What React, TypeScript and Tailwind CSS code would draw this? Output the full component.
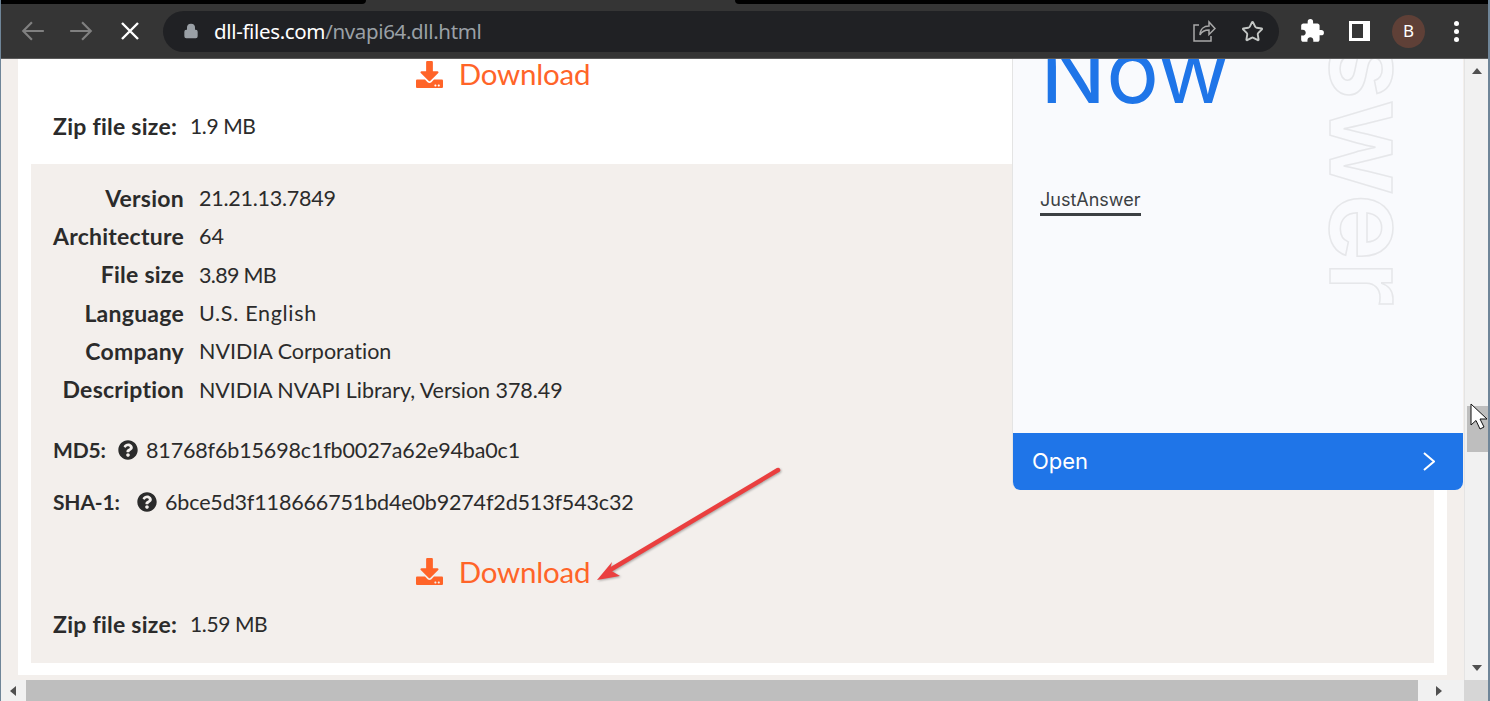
import { Lock, Star } from 'lucide-react';
import { FaDownload, FaQuestionCircle } from 'react-icons/fa';
import { MdExtension } from 'react-icons/md';

const details = [
  ['Version', '21.21.13.7849', 'tracking-[-0.25px]'],
  ['Architecture', '64', ''],
  ['File size', '3.89 MB', 'tracking-[-0.7px]'],
  ['Language', 'U.S. English', 'tracking-[0.7px]'],
  ['Company', 'NVIDIA Corporation', ''],
  ['Description', 'NVIDIA NVAPI Library, Version 378.49', 'tracking-[-0.05px]'],
];

function Label({ children }: { children: string }) {
  return <b className="text-[23px] font-bold tracking-[0.25px]">{children}</b>;
}

function DownloadLink({ className }: { className: string }) {
  return (
    <div className={`flex h-[28px] items-center justify-center text-[#ff6428] ${className}`}>
      <FaDownload className="mr-[15px] h-[27px] w-[29px]" />
      <span className="text-[29.500px] leading-[28px] tracking-[-0.2px]">Download</span>
    </div>
  );
}

function ZipSize({ size }: { size: string }) {
  return (
    <p className="flex h-[28px] items-center text-[21px] tracking-[-0.4px] text-[#2b2b2b]">
      <Label>Zip file size:</Label>
      <span className="ml-[13px]">{size}</span>
    </p>
  );
}

function HashRow({ label, labelWidth, hash, className }: { label: string; labelWidth: string; hash: string; className: string }) {
  return (
    <p className={`flex h-[32px] items-center tracking-[-0.15px] ${className}`}>
      <b className={`text-[21px] font-bold ${labelWidth}`}>{label}</b>
      <FaQuestionCircle className="ml-[13px] mr-[8px] h-[20px] w-[20px]" />
      {hash}
    </p>
  );
}

function Toolbar() {
  return (
    <header className="shrink-0">
      <div className="flex h-[4px] bg-[#353535]">
        <div className="w-[366px] rounded-br-[6px] bg-black" />
        <div className="w-[369px]" />
        <div className="flex-1 rounded-bl-[6px] bg-black" />
      </div>
      <div className="flex h-[55px] items-center border-b border-[#5a5a5a] bg-[#353535] pl-[20px]">
        <svg viewBox="0 0 24 24" className="h-[26px] w-[26px] text-[#808080]" fill="none" stroke="currentColor" strokeWidth="2"><path d="M22 12H3M11 4l-8 8 8 8" /></svg>
        <svg viewBox="0 0 24 24" className="ml-[22px] h-[26px] w-[26px] text-[#808080]" fill="none" stroke="currentColor" strokeWidth="2"><path d="M2 12h19M13 4l8 8-8 8" /></svg>
        <svg viewBox="0 0 24 24" className="ml-[24px] h-[24px] w-[24px] text-white" fill="none" stroke="currentColor" strokeWidth="2.4"><path d="M4 4l16 16M20 4L4 20" /></svg>
        <div className="ml-[21px] flex h-[41px] w-[1116px] items-center rounded-full bg-[#202124] pl-[20px] pr-[15px]">
          <Lock className="h-[16px] w-[16px] text-[#9aa0a6]" fill="#9aa0a6" strokeWidth={2} />
          <p className="ml-[15px] flex-1 font-['Noto_Sans',sans-serif] text-[20.500px] tracking-[-0.35px]">
            <span className="text-white">dll-files.com</span>
            <span className="text-[#9aa0a6]">/nvapi64.dll.html</span>
          </p>
          <svg viewBox="0 0 24 24" className="h-[24px] w-[24px] text-[#a8a8a8]" fill="none" stroke="currentColor" strokeWidth="1.5"><path d="M7 6H2v16h17v-5M8 16c0-6 4-9 9-9V3l6 6.500-6 6V11c-4 0-7 1-9 5z" /></svg>
          <Star className="ml-[25px] h-[23px] w-[23px] text-[#c4c7c5]" strokeWidth={2} />
        </div>
        <MdExtension className="ml-[20px] h-[26px] w-[26px] text-white" />
        <div className="ml-[24px] flex h-[20px] w-[21px] bg-white py-[3px] pl-[3px] pr-[7px]"><div className="flex-1 bg-[#353535]" /></div>
        <div className="ml-[22px] flex h-[33px] w-[33px] items-center justify-center rounded-full bg-[#5f4037] font-['Noto_Sans',sans-serif] text-[17px] text-white">B</div>
        <div className="ml-[29px] flex flex-col gap-[3px]">
          <i className="h-[5px] w-[5px] rounded-full bg-white" />
          <i className="h-[5px] w-[5px] rounded-full bg-white" />
          <i className="h-[5px] w-[5px] rounded-full bg-white" />
        </div>
      </div>
    </header>
  );
}

function Ad() {
  return (
    <aside className="absolute left-[1012px] top-0 flex h-[431px] w-[451px] flex-col overflow-hidden rounded-b-[8px] border-l border-[#e4e4e4] bg-[#f9fafd] font-['Inter',sans-serif]">
      <div className="relative flex-1 overflow-hidden pl-[27px]">
        <p className="mt-[-23px] text-[88px] leading-[70px] text-[#1f75e8]">Now</p>
        <p className="mt-[81px] inline-block border-b-[3px] border-[#3c4043] text-[18px] leading-[26px] text-[#3c4043]">JustAnswer</p>
        <span className="absolute left-[321px] top-[-200px] h-[447px] text-right text-[114px] font-semibold leading-[74px] text-transparent [-webkit-text-stroke:1.500px_#e6e7ea] [writing-mode:vertical-rl]">swer</span>
      </div>
      <div className="flex h-[57px] items-center justify-between bg-[#1f75e8] pl-[19px] pr-[28px] text-white">
        <span className="text-[22px]">Open</span>
        <svg viewBox="0 0 12 19" className="h-[19px] w-[12px]" fill="none" stroke="currentColor" strokeWidth="2"><path d="M1 1l10 8.500L1 18" /></svg>
      </div>
    </aside>
  );
}

function VerticalScrollbar() {
  return (
    <div className="flex w-[26px] shrink-0 flex-col border-l border-[#e4e4e4] bg-[#f1f1f1] pr-[2px]">
      <div className="flex h-[24px] items-center justify-center"><i className="border-x-[5px] border-b-[6px] border-x-transparent border-b-[#505050]" /></div>
      <div className="relative flex-1">
        <div className="absolute left-[2px] right-0 top-[323px] h-[46px] bg-[#bebebe]" />
      </div>
      <div className="flex h-[24px] items-center justify-center"><i className="border-x-[5px] border-t-[6px] border-x-transparent border-t-[#505050]" /></div>
    </div>
  );
}

export default function App() {
  return (
    <div className="relative flex h-[701px] w-[1490px] flex-col overflow-hidden bg-[#f3efec] font-['Lato',sans-serif] [font-variant-ligatures:none]">
      <Toolbar />
      <div className="flex min-h-0 flex-1">
        <main className="relative min-w-0 flex-1 overflow-hidden">
          <div className="ml-[18px] h-[616px] w-[1429px] bg-white pt-[1px]">
            <DownloadLink className="w-[969px]" />
            <div className="ml-[35px] mt-[24px]"><ZipSize size="1.9 MB" /></div>
            <section className="ml-[13px] mt-[24px] h-[499px] w-[1403px] bg-[#f3efec] pl-[22px] pt-[15px] text-[21.500px] text-[#2b2b2b]">
              <dl className="grid grid-cols-[131px_1fr] gap-x-[15px]">
                {details.map(([label, value, tracking]) => (
                  <div key={label} className="col-span-2 grid h-[38.300px] grid-cols-subgrid items-center">
                    <dt className="text-right"><Label>{label}</Label></dt>
                    <dd className={tracking}>{value}</dd>
                  </div>
                ))}
              </dl>
              <HashRow className="mt-[25px]" label="MD5:" labelWidth="w-[52px]" hash="81768f6b15698c1fb0027a62e94ba0c1" />
              <HashRow className="mt-[20px]" label="SHA-1:" labelWidth="w-[71px]" hash="6bce5d3f118666751bd4e0b9274f2d513f543c32" />
              <DownloadLink className="mt-[40px] w-[899px]" />
              <div className="mt-[24px]"><ZipSize size="1.59 MB" /></div>
            </section>
          </div>
          <Ad />
        </main>
        <VerticalScrollbar />
      </div>
      <div className="flex h-[21px] shrink-0 bg-[#f1f1f1]">
        <div className="flex w-[26px] items-center justify-center"><i className="border-y-[5px] border-r-[6px] border-y-transparent border-r-[#505050]" /></div>
        <div className="w-[1392px] bg-[#bebebe]" />
        <div className="flex flex-1 items-center justify-center pr-[4px]"><i className="border-y-[5px] border-l-[6px] border-y-transparent border-l-[#505050]" /></div>
        <div className="w-[26px] bg-[#d6d6d6]" />
      </div>
      {/* red annotation arrow */}
      <svg className="absolute left-[590px] top-[460px] h-[130px] w-[200px] drop-shadow-[1px_1px_1px_rgba(0,0,0,0.3)]" viewBox="0 0 200 130" fill="none">
        <path d="M188 10L20 110" stroke="#ea3f3f" strokeWidth="4.500" strokeLinecap="round" />
        <path d="M7 120L22 102L20 110L30 116Z" fill="#ea3f3f" />
      </svg>
      {/* mouse cursor */}
      <svg className="absolute left-[1470px] top-[403px] h-[28px] w-[18px]" viewBox="0 0 18 28">
        <path d="M1 1V22L6 17.500L10 26L14 24L10 16H17Z" fill="#fff" stroke="#111" strokeWidth="1" />
      </svg>
      <div className="absolute inset-y-0 left-0 w-px bg-[#6f8598]" />
      <div className="absolute inset-y-0 right-0 w-[2px] bg-[#6f8598]" />
    </div>
  );
}
